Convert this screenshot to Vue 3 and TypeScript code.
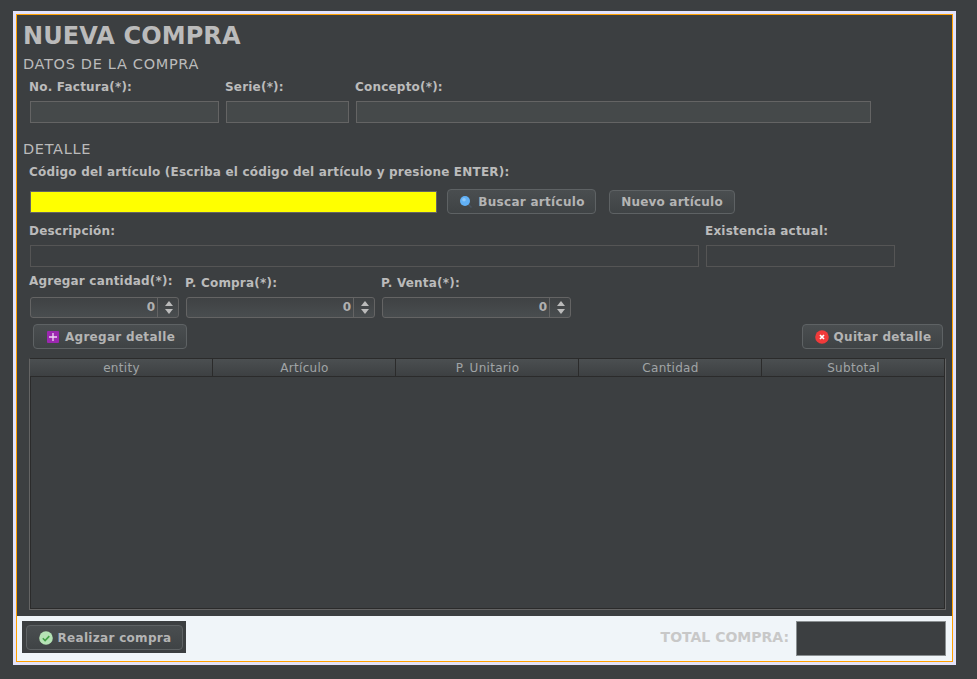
<template>
  <div class="page">
    <div class="frame">
      <div class="content">
        <h1 class="title">NUEVA COMPRA</h1>

        <h2 class="section">DATOS DE LA COMPRA</h2>
        <div class="row labels first-labels">
          <label class="w-factura">No. Factura(*):</label>
          <label class="w-serie">Serie(*):</label>
          <label>Concepto(*):</label>
        </div>
        <div class="row fields">
          <div class="input i-factura"></div>
          <div class="input i-serie"></div>
          <div class="input i-concepto"></div>
        </div>

        <h2 class="section detalle">DETALLE</h2>
        <div class="row labels code-label">
          <label>Código del artículo (Escriba el código del artículo y presione ENTER):</label>
        </div>
        <div class="row code-row">
          <div class="input yellow"></div>
          <button class="btn buscar">
            <svg width="14" height="14" viewBox="0 0 14 14">
              <path d="M9 9l3.5 3.5" stroke="#4a5560" stroke-width="1.5" />
              <circle cx="6" cy="6" r="5" fill="#62b1f6" />
              <circle cx="5" cy="4.8" r="1.8" fill="#8fc9fa" />
            </svg>
            Buscar artículo
          </button>
          <button class="btn nuevo">Nuevo artículo</button>
        </div>

        <div class="row labels desc-labels">
          <label class="w-desc">Descripción:</label>
          <label>Existencia actual:</label>
        </div>
        <div class="row fields desc-fields">
          <div class="input i-desc"></div>
          <div class="input i-factura"></div>
        </div>

        <div class="row labels qty-labels">
          <label class="w-qty">Agregar cantidad(*):</label>
          <label class="w-compra lower">P. Compra(*):</label>
          <label class="lower">P. Venta(*):</label>
        </div>
        <div class="row fields spinners">
          <div v-for="(s, i) in spinnerWidths" :key="i" class="spinner" :style="{ width: s + 'px' }">
            <span class="value">0</span>
            <span class="arrows"><i class="up"></i><i class="down"></i></span>
          </div>
        </div>

        <div class="row actions">
          <button class="btn agregar">
            <svg width="14" height="14" viewBox="0 0 14 14">
              <rect x="1" y="1" width="12" height="12" rx="1" fill="#9c27b0" />
              <path d="M7 3v8M3 7h8" stroke="#f0d8f5" stroke-width="1.3" />
            </svg>
            Agregar detalle
          </button>
          <button class="btn quitar">
            <svg width="14" height="14" viewBox="0 0 14 14">
              <circle cx="7" cy="7" r="6.8" fill="#f03a3a" />
              <path d="M5 5l4 4M9 5l-4 4" stroke="#fff" stroke-width="1.7" />
            </svg>
            Quitar detalle
          </button>
        </div>

        <div class="table">
          <div class="thead">
            <div v-for="c in columns" :key="c" class="th">{{ c }}</div>
          </div>
        </div>
      </div>

      <div class="footer">
        <div class="realizar-wrap">
          <button class="btn realizar">
            <svg width="14" height="14" viewBox="0 0 14 14">
              <circle cx="7" cy="7" r="6.8" fill="#b5e3b5" />
              <path d="M3.8 7.2l2.3 2.3 4.2-4.4" fill="none" stroke="#43a047" stroke-width="1.6" />
            </svg>
            Realizar compra
          </button>
        </div>
        <div class="total">
          <span>TOTAL COMPRA:</span>
          <div class="total-box"></div>
        </div>
      </div>
    </div>
  </div>
</template>

<script setup lang="ts">
const columns: string[] = ['entity', 'Artículo', 'P. Unitario', 'Cantidad', 'Subtotal']
const spinnerWidths: number[] = [149, 189, 189]
</script>

<style>
html,
body {
  margin: 0;
  background: #3c3f41;
}
</style>

<style scoped>
.page {
  width: 977px;
  height: 679px;
  box-sizing: border-box;
  padding: 11px 0 0 13px;
  background: #3c3f41;
  font-family: "DejaVu Sans", sans-serif;
  overflow: hidden;
}

.frame {
  width: 943px;
  height: 654px;
  box-sizing: border-box;
  border: 3px solid #e2e2fa;
  outline: 1px solid #ffa000;
  outline-offset: -4px;
  display: flex;
  flex-direction: column;
  padding: 1px;
}

.content {
  height: 601px;
  box-sizing: border-box;
  padding-left: 6px;
  background: #3c3f41;
}

.title {
  margin: 6px 0 0;
  font-size: 24px;
  line-height: 30px;
  font-weight: 700;
  letter-spacing: 0.1px;
  color: #bbbbbb;
}

.section {
  margin: 5px 0 0;
  font-size: 14.5px;
  line-height: 16px;
  font-weight: 400;
  letter-spacing: 0.68px;
  color: #bbbbbb;
}

.detalle {
  margin-top: 18px;
}

.row {
  display: flex;
  padding-left: 6px;
}

.labels label {
  display: block;
  font-size: 12px;
  line-height: 16px;
  font-weight: 700;
  color: #bbbbbb;
  letter-spacing: 0.2px;
  white-space: nowrap;
}

.w-factura {
  width: 196px;
}

.w-serie {
  width: 130px;
}

.w-desc {
  width: 676px;
}

.w-qty {
  width: 156px;
}

.w-compra {
  width: 196px;
}

.first-labels {
  margin-top: 7px;
}

.fields {
  padding-left: 7px;
  gap: 7px;
  margin-top: 6px;
}

.input {
  height: 22px;
  box-sizing: border-box;
  background: #45494a;
  border: 1px solid #646464;
}

.i-factura {
  width: 189px;
}

.i-serie {
  width: 123px;
}

.i-concepto {
  width: 515px;
}

.i-desc {
  width: 669px;
}

.code-label {
  margin-top: 7px;
}

.code-row {
  padding-left: 7px;
  margin-top: 9px;
  align-items: center;
  height: 25px;
}

.yellow {
  width: 407px;
  background: #ffff00;
}

.desc-labels {
  margin-top: 9px;
}

.desc-fields .input {
  background: #3c3f41;
  border-color: #555555;
}

.qty-labels {
  margin-top: 6px;
  height: 18px;
}

.qty-labels .lower {
  margin-top: 2px;
}

.spinners {
  margin-top: 6px;
}

.spinner {
  height: 21px;
  box-sizing: border-box;
  display: flex;
  justify-content: flex-end;
  border: 1px solid #646464;
  border-radius: 3px;
  background: linear-gradient(#3f4244, #494d4f);
}

.value {
  font-size: 12px;
  font-weight: 700;
  line-height: 19px;
  color: #b0b0b0;
  padding-right: 2px;
}

.arrows {
  width: 18px;
  padding-left: 2px;
  border-left: 1px solid #646464;
  display: flex;
  flex-direction: column;
  align-items: center;
  justify-content: center;
  gap: 3px;
}

.arrows i {
  width: 0;
  height: 0;
  border-left: 4.5px solid transparent;
  border-right: 4.5px solid transparent;
}

.arrows .up {
  border-bottom: 5px solid #bbbbbb;
}

.arrows .down {
  border-top: 5px solid #bbbbbb;
}

.btn {
  height: 25px;
  box-sizing: border-box;
  display: inline-flex;
  align-items: center;
  justify-content: center;
  gap: 5px;
  padding: 0;
  border: 1px solid #5e6264;
  border-radius: 4px;
  background: linear-gradient(#4a4e50, #3f4345);
  color: #b4b4b4;
  font-family: inherit;
  font-size: 12px;
  font-weight: 700;
  letter-spacing: 0.3px;
}

.btn svg {
  margin-left: 1px;
}

.buscar {
  width: 149px;
  margin-left: 10px;
}

.nuevo {
  width: 126px;
  height: 24px;
  margin-left: 13px;
  letter-spacing: 0.2px;
}

.actions {
  padding-left: 10px;
  margin-top: 6px;
  justify-content: space-between;
  width: 920px;
  box-sizing: border-box;
}

.agregar {
  width: 154px;
}

.quitar {
  width: 141px;
}

.table {
  width: 917px;
  height: 252px;
  box-sizing: border-box;
  margin: 9px 0 0 6px;
  border: 1px solid #646464;
  border-top-color: #2b2b2b;
  background: #3c3f41;
  box-shadow: inset 1px 1px 0 #2b2b2b, inset -1px -1px 0 #2b2b2b;
}

.thead {
  display: grid;
  grid-template-columns: repeat(5, 183px);
  height: 17px;
  border-bottom: 1px solid #2b2b2b;
  background: linear-gradient(#4b4f51, #3d4042);
}

.th {
  box-sizing: border-box;
  padding-left: 1px;
  border-right: 1px solid #2b2b2b;
  text-align: center;
  font-size: 12px;
  line-height: 18px;
  letter-spacing: 0.3px;
  color: #a0a4a6;
}

.footer {
  flex: 1;
  display: flex;
  justify-content: space-between;
  box-sizing: border-box;
  padding: 5px 6px 0 5px;
  background: #f0f5f9;
}

.realizar-wrap {
  width: 164px;
  height: 32px;
  box-sizing: border-box;
  padding: 4px 3px 0 4px;
  background: #3c3f41;
}

.realizar {
  width: 157px;
}

.total {
  display: flex;
  gap: 7px;
  height: 35px;
}

.total span {
  font-size: 14px;
  line-height: 32px;
  font-weight: 700;
  color: #c8c8c8;
}

.total-box {
  width: 150px;
  height: 35px;
  box-sizing: border-box;
  background: #3c3f41;
  border: 1px solid #8a8f91;
}
</style>
